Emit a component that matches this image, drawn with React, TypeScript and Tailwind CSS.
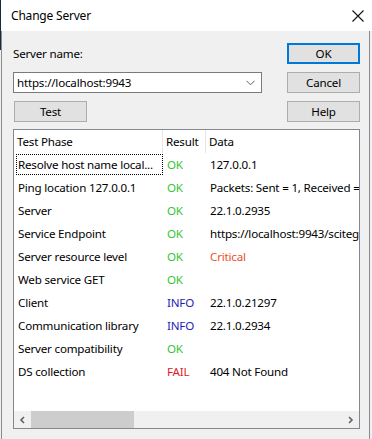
import React from "react";

const rows: { phase: string; result: string; rc: string; data: string; dc?: string }[] = [
  { phase: "Resolve host name local...", result: "OK", rc: "text-[#35c435]", data: "127.0.0.1" },
  { phase: "Ping location 127.0.0.1", result: "OK", rc: "text-[#35c435]", data: "Packets: Sent = 1, Received =" },
  { phase: "Server", result: "OK", rc: "text-[#35c435]", data: "22.1.0.2935" },
  { phase: "Service Endpoint", result: "OK", rc: "text-[#35c435]", data: "https://localhost:9943/sciteg" },
  { phase: "Server resource level", result: "OK", rc: "text-[#35c435]", data: "Critical", dc: "text-[#e8512a]" },
  { phase: "Web service GET", result: "OK", rc: "text-[#35c435]", data: "" },
  { phase: "Client", result: "INFO", rc: "text-[#1c1cb4]", data: "22.1.0.21297" },
  { phase: "Communication library", result: "INFO", rc: "text-[#1c1cb4]", data: "22.1.0.2934" },
  { phase: "Server compatibility", result: "OK", rc: "text-[#35c435]", data: "" },
  { phase: "DS collection", result: "FAIL", rc: "text-[#e0182c]", data: "404 Not Found" },
];

function Btn({ label, def }: { label: string; def?: boolean }) {
  return (
    <div
      className={
        "w-[73px] h-[21px] flex items-center justify-center bg-[#e1e1e1] " +
        (def ? "border-2 border-[#0078d7]" : "border border-[#adadad]")
      }
    >
      {label}
    </div>
  );
}

export default function App() {
  return (
    <div
      className="w-[372px] h-[439px] bg-[#f0f0f0] relative overflow-hidden text-[11.6px] tracking-[-0.2px] text-black flex flex-col"
      style={{ fontFamily: '"Segoe UI", "Noto Sans", sans-serif' }}
    >
      <div className="absolute left-0 top-0 w-[1px] h-[50px] bg-[#1b2a44]" />
      {/* title bar */}
      <div className="h-[31px] bg-white flex items-center pl-[11px] pr-[4px] shrink-0">
        <span className="flex-1 text-[12px]">Change Server</span>
        <svg width="14" height="14" viewBox="0 0 14 14" className="mr-[3px]">
          <path d="M1.5 1.5 L12.5 12.5 M12.5 1.5 L1.5 12.5" stroke="#111" strokeWidth="1.1" />
        </svg>
      </div>
      {/* body */}
      <div className="flex-1 ml-[1px] mr-[2px] border-l border-r border-[#8c8c8c] pl-[11px] pr-[9px] pt-[12px] pb-[10px] flex flex-col">
        <div className="flex items-center justify-between h-[21px]">
          <span>Server name:</span>
          <Btn label="OK" def />
        </div>
        <div className="flex items-center justify-between h-[21px] mt-[8px]">
          <div className="w-[249px] h-[21px] bg-white border border-[#7a7a7a] flex items-center pl-[3px] pr-[6px]">
            <span className="flex-1">https://localhost:9943</span>
            <svg width="9" height="6" viewBox="0 0 9 6">
              <path d="M0.5 0.8 L4.5 4.8 L8.5 0.8" stroke="#606060" strokeWidth="1" fill="none" />
            </svg>
          </div>
          <Btn label="Cancel" />
        </div>
        <div className="flex items-center justify-between h-[21px] mt-[8px]">
          <div className="ml-[1px]">
            <Btn label="Test" />
          </div>
          <Btn label="Help" />
        </div>
        {/* list */}
        <div className="mt-[7px] flex-1 bg-white border border-[#828790] flex flex-col overflow-hidden">
          <div className="h-[23px] flex items-center shrink-0">
            <div className="w-[149px] pl-[3px] h-full flex items-center border-r border-[#e5e5e5]">Test Phase</div>
            <div className="w-[43px] pl-[3px] h-full flex items-center border-r border-[#e5e5e5]">Result</div>
            <div className="flex-1 pl-[3px] h-full flex items-center">Data</div>
          </div>
          <div className="flex-1 flex flex-col">
            {rows.map((r, i) => (
              <div key={i} className="h-[23px] flex items-center whitespace-nowrap shrink-0">
                <div className="w-[149px] h-full pl-[2px] flex items-center">
                  <div
                    className={
                      "h-[21px] w-[147px] flex items-center pl-[1px] " +
                      (i === 0 ? "border border-dotted border-black" : "border border-transparent")
                    }
                  >
                    {r.phase}
                  </div>
                </div>
                <div className={"w-[43px] pl-[4px] " + r.rc}>{r.result}</div>
                <div className={"flex-1 pl-[4px] overflow-hidden " + (r.dc ?? "")}>{r.data}</div>
              </div>
            ))}
          </div>
          {/* scrollbar */}
          <div className="h-[17px] bg-[#f0f0f0] flex items-stretch shrink-0">
            <div className="w-[17px] flex items-center justify-center">
              <svg width="7" height="8" viewBox="0 0 7 8">
                <path d="M5 1 L2 4 L5 7" stroke="#606060" strokeWidth="1.6" fill="none" />
              </svg>
            </div>
            <div className="w-[103px] bg-[#cdcdcd]" />
            <div className="flex-1" />
            <div className="w-[17px] flex items-center justify-center">
              <svg width="7" height="8" viewBox="0 0 7 8">
                <path d="M2 1 L5 4 L2 7" stroke="#606060" strokeWidth="1.6" fill="none" />
              </svg>
            </div>
          </div>
        </div>
      </div>
    </div>
  );
}
